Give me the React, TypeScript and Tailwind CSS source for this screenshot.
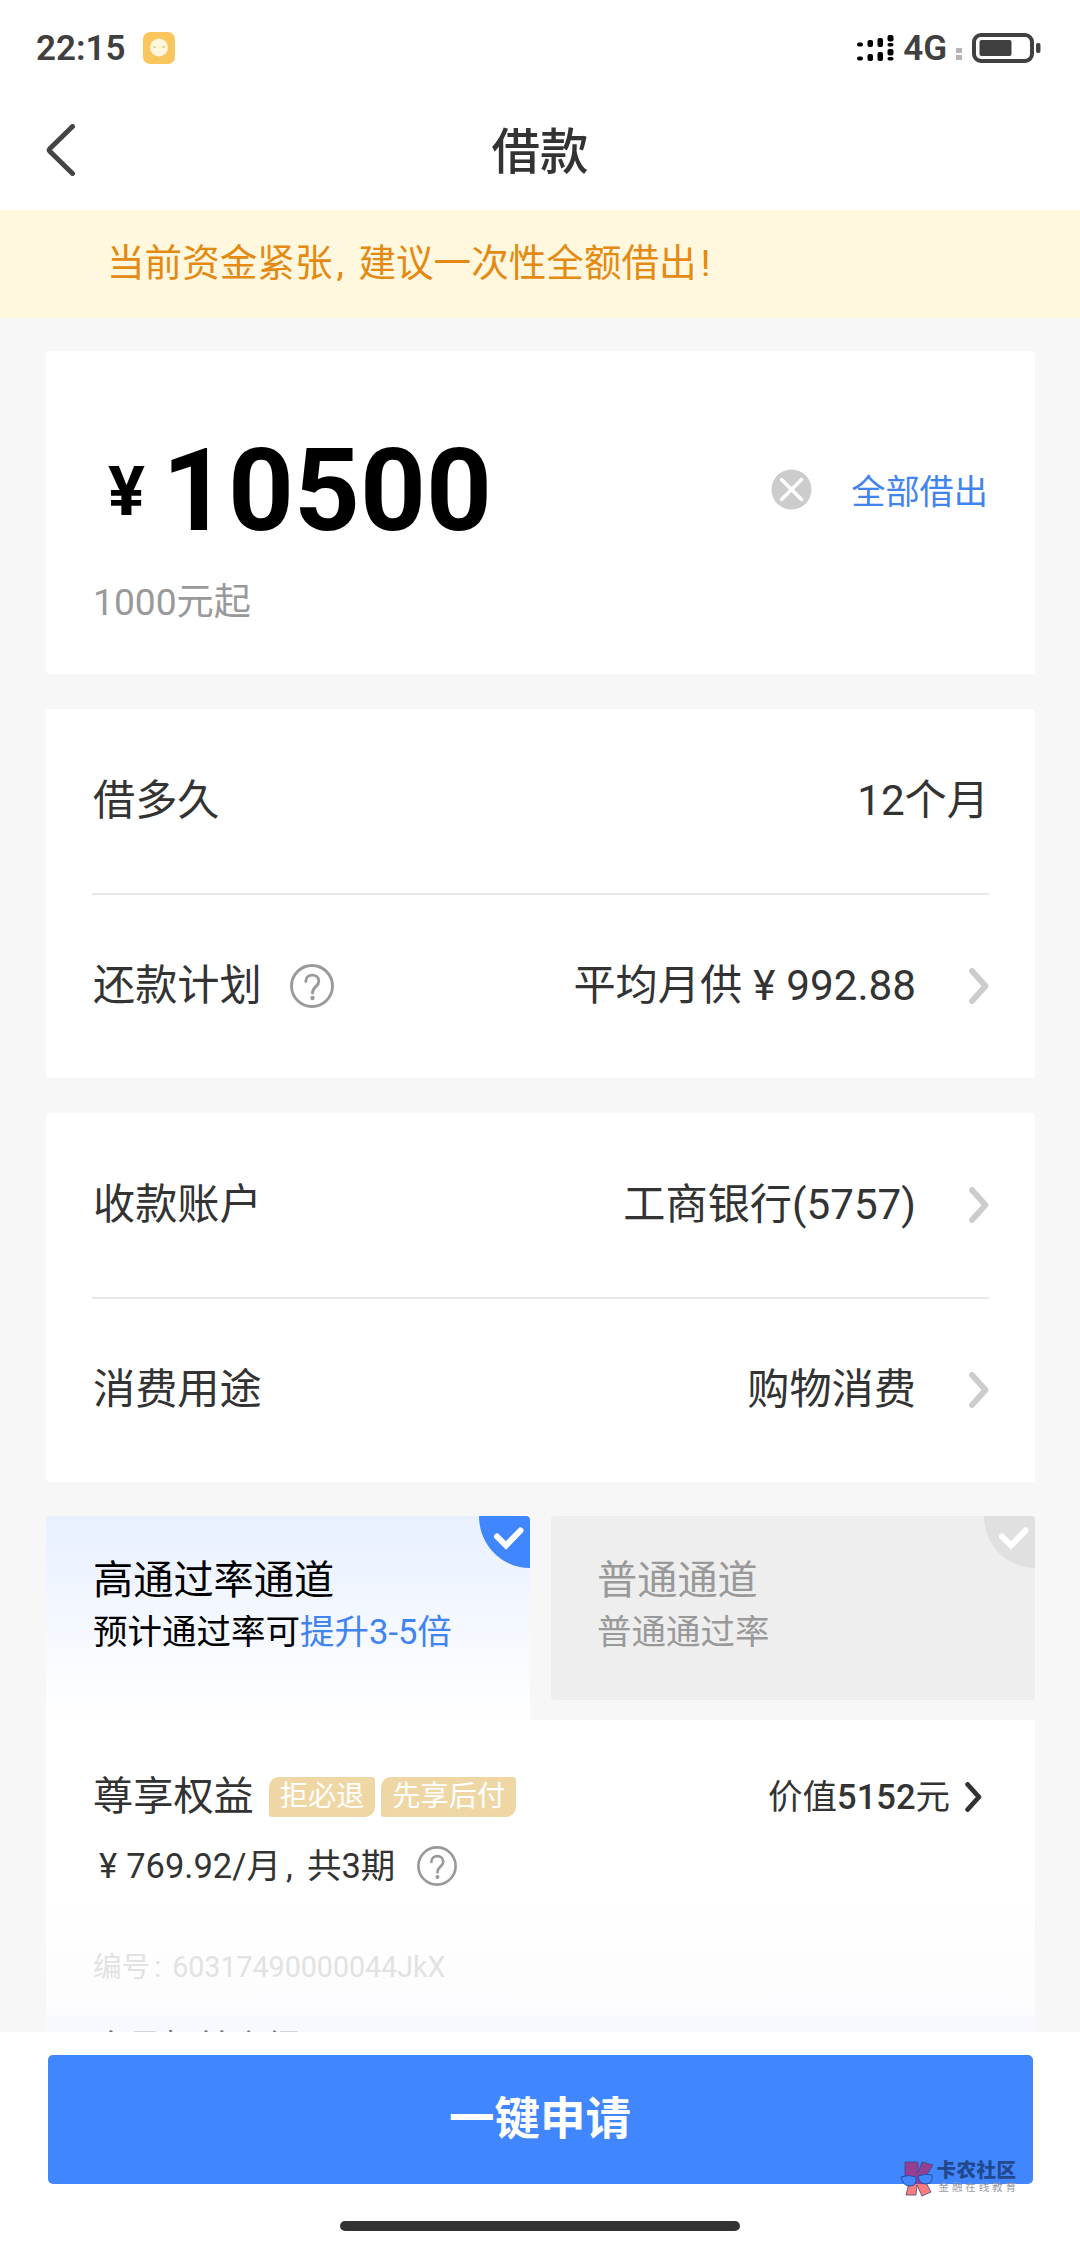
import { ReactNode } from "react";

const Chevron = ({ className }: { className?: string }) => (
  <svg className={className} viewBox="0 0 20 36" fill="none">
    <path
      d="M3 3 16.500 18 3 33"
      stroke="currentColor"
      strokeWidth="5.800"
      strokeLinecap="round"
      strokeLinejoin="round"
    />
  </svg>
);

const Help = ({ className }: { className?: string }) => (
  <svg className={className} viewBox="0 0 44 44" fill="none" stroke="#999">
    <circle cx="22" cy="22" r="20.500" strokeWidth="2.900" />
    <path
      d="M15.800 17.500c0-4 2.800-6.400 6.500-6.400s6.500 2.500 6.500 6.100c0 5.600-6.300 5.400-6.300 11.800"
      strokeWidth="2.900"
      strokeLinecap="round"
    />
    <circle cx="22.500" cy="34" r="2.200" fill="#999" stroke="none" />
  </svg>
);

const Comma = ({ className }: { className: string }) => (
  <span className={`inline-block ${className}`}>,</span>
);

const StatusBar = () => (
  <div className="flex h-[96px] items-center pl-[36px] pr-[39px] text-[#404040]">
    <span className="w-[89px] text-[35px] font-semibold leading-none">22:15</span>
    <svg className="ml-[18px] h-8 w-8" viewBox="0 0 32 32">
      <rect width="32" height="32" rx="7" fill="#f8c65c" />
      <circle cx="16" cy="15.500" r="9" fill="#fff6dc" />
      <path d="M10 15h3M19 15h3" stroke="#eecb7b" strokeWidth="1.500" />
    </svg>
    <svg className="ml-auto h-[26px] w-[37px]" viewBox="0 0 37 26" fill="#000">
      <rect x="0" y="7.500" width="6" height="4" rx="2" />
      <rect x="0" y="21.500" width="6" height="4" rx="2" />
      <rect x="10.500" y="5" width="5.500" height="7" rx="2" />
      <rect x="10.500" y="19" width="5.500" height="7" rx="2" />
      <rect x="20.500" y="3" width="5.500" height="9" rx="2" />
      <rect x="20.500" y="17" width="5.500" height="9" rx="2" />
      <rect x="30.500" y="0" width="6" height="6.500" rx="2" />
      <rect x="30.500" y="8" width="6" height="3.500" rx="1.700" />
      <rect x="30.500" y="14" width="6" height="6.500" rx="2" />
      <rect x="30.500" y="22" width="6" height="3.500" rx="1.700" />
    </svg>
    <span className="ml-[9px] text-[35px] font-semibold leading-none">4G</span>
    <div className="ml-[9px] mt-3 flex flex-col gap-[2px]">
      <div className="h-[5px] w-[6px] bg-[#b5b5b5]" />
      <div className="h-[5px] w-[6px] bg-[#b5b5b5]" />
    </div>
    <svg className="ml-[10px] h-[30px] w-[69px]" viewBox="0 0 69 30">
      <rect x="2" y="2" width="58" height="26" rx="7" fill="none" stroke="#404040" strokeWidth="4" />
      <rect x="7.500" y="7" width="32" height="16" rx="2" fill="#404040" />
      <rect x="64" y="10" width="4.500" height="10" rx="2" fill="#404040" />
    </svg>
  </div>
);

const NavBar = () => (
  <div className="relative flex h-[114px] items-center justify-center">
    <svg
      className="absolute left-[46px] top-[28px] h-[52px] w-[30px]"
      viewBox="0 0 30 52"
      fill="none"
    >
      <path
        d="M26.500 2.500 4 24.500q-1.500 1.500 0 3l22.500 22"
        stroke="#444"
        strokeWidth="5"
        strokeLinecap="round"
      />
    </svg>
    <h1 className="text-[48.500px] font-medium leading-none text-[#333]">
      借款
    </h1>
  </div>
);

type RowProps = {
  label: string;
  children: ReactNode;
  help?: boolean;
  arrow?: boolean;
};

const Row = ({ label, children, help = false, arrow = false }: RowProps) => (
  <div className="flex flex-1 items-center text-[42.200px] leading-none text-[#333]">
    <span className="ml-px">{label}</span>
    {help && <Help className="ml-[28px] h-[44px] w-[44px]" />}
    <span className="ml-auto">{children}</span>
    {arrow && <Chevron className="ml-[53px] h-[36px] w-[20px] text-[#ccc]" />}
  </div>
);

const Card = ({ children }: { children: ReactNode }) => (
  <section className="mt-[35px] flex h-[369px] shrink-0 flex-col rounded-[4px] bg-white px-[46px]">
    {children}
  </section>
);

const Divider = () => <div className="h-[2px] bg-[#e8e8e8]" />;

const Corner = ({ color }: { color: string }) => (
  <svg className="absolute right-0 top-0 h-[52px] w-[51px]" viewBox="0 0 51 52">
    <path d="M0 0h47q4 0 4 4v48C23 52 0 29 0 0Z" fill={color} />
    <path
      d="m18 20.500 9 9L41.500 14.500"
      fill="none"
      stroke="#fff"
      strokeWidth="6"
      strokeLinecap="round"
    />
  </svg>
);

const Tag = ({ children }: { children: ReactNode }) => (
  <span className="flex h-[40px] items-center rounded-[3px] rounded-br-[10px] rounded-tl-[10px] bg-[#efd7a5] px-[11px] text-[28.200px] leading-none text-white">
    {children}
  </span>
);

const Watermark = () => (
  <div className="absolute left-[852px] top-[106px] flex gap-[3px]">
    <svg className="h-[36px] w-[34px]" viewBox="0 0 34 36">
      <defs>
        <linearGradient id="brand" x1="0" y1="0" x2="0" y2="1">
          <stop offset="0.64" stopColor="#943f91" />
          <stop offset="0.65" stopColor="#fb7b7e" />
        </linearGradient>
      </defs>
      <path
        d="M5 1h13v11l4-11 11 3-9 14 7 13-9 4-5-11-1 10H6l3-12-4-4Z"
        fill="url(#brand)"
        stroke="#3c4780"
        strokeWidth="0.800"
      />
      <g fill="#4086ff" stroke="#27509c" strokeWidth="1">
        <path d="M1 16q8-3 15 0 1 9-6 9T1 16Z" />
        <path d="M18 15q8-3 14-1 1 9-6 9t-8-8Z" />
      </g>
    </svg>
    <div className="flex flex-col whitespace-nowrap leading-none">
      <span className="text-[19.500px] font-black tracking-[0.500px] text-[#23488c]">
        卡农社区
      </span>
      <span className="mt-[2px] pl-[2px] text-[10.500px] tracking-[2.900px] text-[#9a9a9f]">
        金融在线教育
      </span>
    </div>
  </div>
);

export default function App() {
  return (
    <div className="flex h-[2248px] w-[1080px] flex-col overflow-hidden bg-[#f7f7f7] font-[Roboto,'Noto_Sans_CJK_SC',sans-serif]">
      <header className="bg-white">
        <StatusBar />
        <NavBar />
      </header>

      <div className="flex h-[108px] items-center whitespace-nowrap bg-[#fff8df] pl-[107px] text-[37.600px] leading-none text-[#e48a12]">
        当前资金紧张
        <Comma className="w-[26px] pl-[4px]" />
        建议一次性全额借出
        <span className="pl-[4px]">!</span>
      </div>

      <main className="flex h-[1714px] flex-col overflow-hidden pl-[46px] pr-[45px] pt-[33px]">
        <section className="flex h-[323px] shrink-0 flex-col rounded-[4px] bg-white px-[47px] pt-[71px]">
          <div className="flex h-[136px] items-center">
            <span className="ml-[15px] mt-[2px] text-[69px] font-bold leading-none text-black">
              ¥
            </span>
            <span className="ml-[17px] mt-px text-[115px] font-bold leading-none text-black">
              10500
            </span>
            <svg className="mb-[2px] ml-auto h-[41px] w-[41px]" viewBox="0 0 41 41">
              <circle cx="20.500" cy="20.500" r="20" fill="#ccc" />
              <path
                d="m10.500 10.500 20 20m0-20-20 20"
                stroke="#fff"
                strokeWidth="3.500"
                strokeLinecap="round"
              />
            </svg>
            <span className="ml-[39px] mt-[4px] text-[34.200px] leading-none text-[#4184f0]">
              全部借出
            </span>
          </div>
          <p className="mt-[26px] text-[37.200px] leading-none text-[#999]">
            1000元起
          </p>
        </section>

        <Card>
          <Row label="借多久">12个月</Row>
          <Divider />
          <Row label="还款计划" help arrow>
            平均月供<span className="mx-[11px]">¥</span>992.88
          </Row>
        </Card>

        <Card>
          <Row label="收款账户" arrow>
            工商银行(5757)
          </Row>
          <Divider />
          <Row label="消费用途" arrow>
            购物消费
          </Row>
        </Card>

        <div className="mt-[34px] flex h-[204px] shrink-0 justify-between">
          <div className="relative w-[484px] rounded-t-[4px] bg-linear-to-b from-[#e8f0ff] to-white pl-[47px] pt-[45px] text-black">
            <Corner color="#4086ff" />
            <p className="text-[40.200px] leading-none">高通过率通道</p>
            <p className="mt-[14px] text-[34.500px] leading-none">
              预计通过率可<span className="text-[#4184f0]">提升3-5倍</span>
            </p>
          </div>
          <div className="relative h-[184px] w-[484px] rounded-[4px] bg-[#eee] pl-[46px] pt-[45px] text-[#999]">
            <Corner color="#e0e0e0" />
            <p className="text-[40.200px] leading-none">普通通道</p>
            <p className="mt-[14px] text-[34.500px] leading-none">普通通过率</p>
          </div>
        </div>

        <section className="h-[296px] shrink-0 bg-linear-to-b from-white from-60% to-[#fcfcfe] px-[47px] pt-[57px] text-[#333]">
          <div className="flex h-[40px] items-center">
            <h2 className="text-[40.200px] leading-none">尊享权益</h2>
            <div className="ml-[15px] flex gap-[6px]">
              <Tag>拒必退</Tag>
              <Tag>先享后付</Tag>
            </div>
            <span className="ml-auto text-[34.500px] leading-none">
              价值<span className="font-medium">5152</span>元
            </span>
            <Chevron className="ml-[15px] mr-[6px] h-[30px] w-[17px]" />
          </div>
          <div className="mt-[27px] flex h-[44px] items-center text-[34.500px] leading-none">
            <span className="pl-[6px]">
              ¥<span className="ml-[9px]">769.92/月</span>
              <Comma className="w-[26px] pl-[5px]" />
              共3期
            </span>
            <Help className="ml-[22px] h-[40px] w-[40px]" />
          </div>
          <p className="mt-[65px] text-[28.600px] leading-none text-[#e2e2e2]">
            编号<span className="inline-block w-[22px] pl-[4px]">:</span>
            60317490000044JkX
          </p>
        </section>
        {/* next channel block, only its top edge shows above the footer */}
        <section className="h-[16px] shrink-0 overflow-hidden bg-[#f7f9ff] px-[47px] pt-[14px] text-[34.500px] leading-none text-[#777]">
          会员权益介绍
        </section>
      </main>

      <footer className="flex flex-1 flex-col items-center bg-white pt-[23px]">
        <div className="relative">
          <button className="block h-[129px] w-[985px] rounded-[5px] bg-[#4086ff] text-[45.500px] font-bold leading-none text-white">
            一键申请
          </button>
          <Watermark />
        </div>
        <div className="mt-[37px] h-[10px] w-[400px] rounded-full bg-[#333]" />
      </footer>
    </div>
  );
}
